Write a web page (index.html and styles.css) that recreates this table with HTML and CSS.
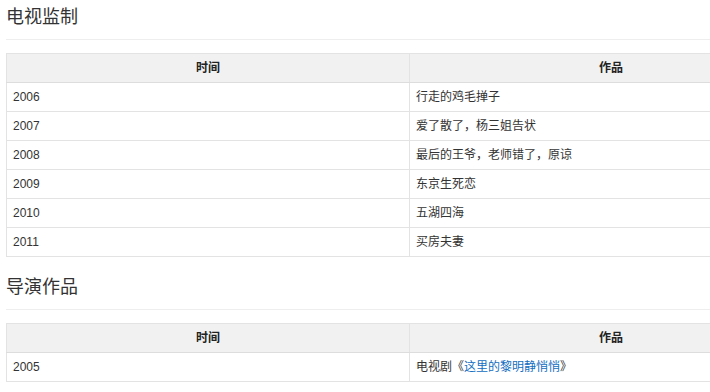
FILE: index.html
```html
<!DOCTYPE html>
<html lang="zh">
<head>
<meta charset="utf-8">
<title>作品</title>
<link rel="stylesheet" href="styles.css">
</head>
<body>
<div class="page">
  <section class="sec">
    <h3 class="title">电视监制</h3>
    <table class="tbl">
      <thead><tr><th>时间</th><th>作品</th></tr></thead>
      <tbody>
        <tr><td>2006</td><td>行走的鸡毛掸子</td></tr>
        <tr><td>2007</td><td>爱了散了，杨三姐告状</td></tr>
        <tr><td>2008</td><td>最后的王爷，老师错了，原谅</td></tr>
        <tr><td>2009</td><td>东京生死恋</td></tr>
        <tr><td>2010</td><td>五湖四海</td></tr>
        <tr><td>2011</td><td>买房夫妻</td></tr>
      </tbody>
    </table>
  </section>
  <section class="sec">
    <h3 class="title">导演作品</h3>
    <table class="tbl">
      <thead><tr><th>时间</th><th>作品</th></tr></thead>
      <tbody>
        <tr><td>2005</td><td>电视剧《<a class="lnk" href="#">这里的黎明静悄悄</a>》</td></tr>
      </tbody>
    </table>
  </section>
</div>
</body>
</html>
```
FILE: styles.css
```css
html, body {
  margin: 0;
  padding: 0;
  overflow: hidden;
  background: #fff;
}
.page {
  width: 807px;
  padding: 0 6px;
  font-family: "Liberation Sans", Arial, "Noto Sans CJK SC", sans-serif;
  color: #333;
  font-size: 12px;
}
.title {
  margin: 0;
  padding: 7px 0 12px;
  font-size: 18px;
  line-height: 20px;
  font-weight: normal;
  color: #333;
  border-bottom: 1px solid #eee;
}
.tbl {
  width: 807px;
  margin: 13px 0;
  border-collapse: collapse;
  table-layout: fixed;
  border: 1px solid #ddd;
}
.tbl th, .tbl td {
  border: 1px solid #e3e3e3;
  height: 28px;
  padding: 0 6px;
  line-height: 16px;
  vertical-align: middle;
}
.tbl th {
  background: #f1f1f1;
  font-weight: bold;
  text-align: center;
  color: #222;
  border-bottom-color: #ddd;
}
.tbl td {
  text-align: left;
}
.lnk {
  color: #136ec2;
  text-decoration: none;
}
```
